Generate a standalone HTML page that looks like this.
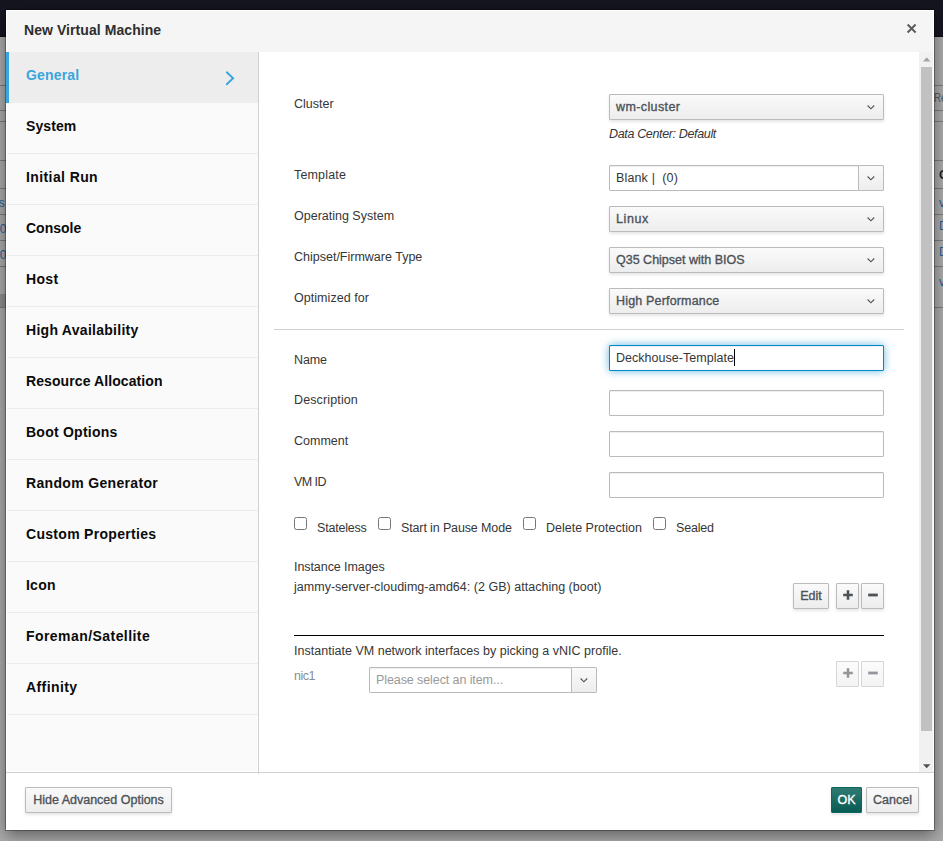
<!DOCTYPE html>
<html>
<head>
<meta charset="utf-8">
<title>New Virtual Machine</title>
<style>
*{box-sizing:border-box;margin:0;padding:0}
html,body{width:943px;height:841px;overflow:hidden}
body{position:relative;background:#ababab;font-family:"Liberation Sans",sans-serif;font-size:13px;color:#363636}
.abs{position:absolute}
#topbar{left:0;top:0;width:943px;height:37px;background:#14151f;border-bottom:1px solid #0c0d14}
.bgline{position:absolute;height:1px;background:#7b7b7b}
.bgtxt{position:absolute;font-size:12px;line-height:14px;color:#1c5f92;white-space:nowrap}
#dlg{left:6px;top:10px;width:928px;height:820px;background:#fff;box-shadow:0 0 0 1px rgba(0,0,0,.3),0 5px 15px rgba(0,0,0,.46)}
#hdr{left:1px;top:1px;width:926px;height:41px;background:#f5f5f5}
#title{left:17px;letter-spacing:0.07px;top:10px;font-size:14px;font-weight:bold;color:#2e2e2e;white-space:nowrap;line-height:18px}
#side{left:1px;top:42px;width:250px;height:719px;background:#fafafa}
#sideb{left:252px;top:42px;width:1px;height:722px;background:#d1d1d1;z-index:2}
.it{position:absolute;left:0;width:251px;height:51px;background:#fafafa;border-bottom:1px solid #ececec;font-size:14px;font-weight:bold;color:#0b0b0b;line-height:18px;padding:14px 0 0 19px;white-space:nowrap}
.it.act{left:-1px;width:252px;background:#ededed;color:#39a5dc;border-bottom:none;height:51px;border-left:3px solid #39a5dc;padding-left:17px;padding-top:14px}
#content{left:253px;top:42px;width:661px;height:720px;background:#fff}
.lbl{position:absolute;left:288px;font-size:12.5px;line-height:16px;color:#363636;white-space:nowrap}
.sel{position:absolute;left:603px;width:275px;height:26px;border:1px solid #bbb;border-radius:1px;background:linear-gradient(#fafafa,#ededed);box-shadow:0 2px 3px rgba(3,3,3,.1);font-size:12.5px;-webkit-text-stroke:0.35px #4d5258;color:#4d5258;line-height:24px;padding-left:6px;white-space:nowrap}
.inp{position:absolute;left:603px;width:275px;height:26px;border:1px solid #bbb;border-radius:1px;background:#fff;box-shadow:inset 0 1px 1px rgba(3,3,3,.075);font-size:12.5px;line-height:24px;padding-left:6px;color:#363636;white-space:nowrap}
.inp.focus{border-color:#0088ce;box-shadow:inset 0 1px 1px rgba(3,3,3,.075),0 0 8px rgba(0,136,206,.6)}
.btn{position:absolute;height:26px;border:1px solid #bbb;border-radius:1px;background:linear-gradient(#fafafa,#ededed);box-shadow:0 2px 3px rgba(3,3,3,.1);font-size:12.5px;-webkit-text-stroke:0.35px #4d5258;color:#4d5258;line-height:24px;text-align:center;white-space:nowrap}
.cb{position:absolute;top:507px;width:13px;height:13px;border:1px solid #767676;border-radius:2.5px;background:#fff}
.cbl{position:absolute;top:510px;font-size:12.5px;line-height:16px;white-space:nowrap}
svg{position:absolute;overflow:visible}
</style>
</head>
<body>
<div id="topbar" class="abs"></div>

<!-- background page peeking out at the edges -->
<div id="bgL" class="abs" style="left:0;top:0;width:6px;height:841px;overflow:hidden">
  <div class="bgline" style="left:0;width:6px;top:85px"></div>
  <div class="bgline" style="left:0;width:6px;top:110px"></div>
  <div class="bgline" style="left:0;width:6px;top:121px"></div>
  <div class="bgline" style="left:0;width:6px;top:160px"></div>
  <div class="bgline" style="left:0;width:6px;top:188px"></div>
  <div class="bgline" style="left:0;width:6px;top:214px"></div>
  <div class="bgline" style="left:0;width:6px;top:240px"></div>
  <div class="bgline" style="left:0;width:6px;top:266px"></div>
  <div class="bgline" style="left:0;width:6px;top:307px"></div>
  <div class="abs" style="left:0;top:294px;width:6px;height:13px;background:#8e8e8e"></div>
  <div class="bgtxt" style="left:-1.3px;top:196px">s</div>
  <div class="bgtxt" style="left:-4.2px;top:222px">-0</div>
  <div class="bgtxt" style="left:-0.3px;top:248px">0</div>
</div>
<div id="bgR" class="abs" style="left:934px;top:0;width:9px;height:841px;overflow:hidden">
  <div class="bgline" style="left:0;width:9px;top:85px"></div>
  <div class="bgline" style="left:0;width:9px;top:110px"></div>
  <div class="bgline" style="left:0;width:9px;top:121px"></div>
  <div class="bgline" style="left:0;width:9px;top:160px"></div>
  <div class="bgline" style="left:0;width:9px;top:188px"></div>
  <div class="bgline" style="left:0;width:9px;top:214px"></div>
  <div class="bgline" style="left:0;width:9px;top:240px"></div>
  <div class="bgline" style="left:0;width:9px;top:266px"></div>
  <div class="bgline" style="left:0;width:9px;top:307px"></div>
  <div class="bgtxt" style="left:-0.5px;top:91px;color:#4d5a66;transform:scaleX(.8);transform-origin:0 0">Re</div>
  <div class="bgtxt" style="left:5px;top:168px;color:#1d1d1d;font-weight:bold">C</div>
  <div class="bgtxt" style="left:5px;top:196px">v</div>
  <div class="bgtxt" style="left:5px;top:219px">D</div>
  <div class="bgtxt" style="left:5px;top:245px">D</div>
  <div class="bgtxt" style="left:5px;top:274.5px">v</div>
</div>

<div id="dlg" class="abs">
  <div id="hdr" class="abs">
    <div id="title" class="abs">New Virtual Machine</div>
    <svg style="left:899px;top:12px" width="12" height="12" viewBox="0 0 12 12"><path d="M1.6 1.5 L9.6 9.5 M9.6 1.5 L1.6 9.5" stroke="#5a5a5a" stroke-width="1.9" fill="none"/></svg>
  </div>

  <div id="side" class="abs">
    <div class="it act" style="top:0;letter-spacing:0.17px">General
      <svg style="left:216px;top:19px" width="10" height="15" viewBox="0 0 10 15"><path d="M1.8 1.3 L8.1 7.3 L1.8 13.3" stroke="#39a5dc" stroke-width="1.9" stroke-linecap="round" fill="none"/></svg>
    </div>
    <div class="it" style="top:51px;letter-spacing:0.10px">System</div>
    <div class="it" style="top:102px;letter-spacing:0.40px">Initial Run</div>
    <div class="it" style="top:153px;letter-spacing:0.00px">Console</div>
    <div class="it" style="top:204px;letter-spacing:0.33px">Host</div>
    <div class="it" style="top:255px;letter-spacing:0.28px">High Availability</div>
    <div class="it" style="top:306px;letter-spacing:0.09px">Resource Allocation</div>
    <div class="it" style="top:357px;letter-spacing:0.24px">Boot Options</div>
    <div class="it" style="top:408px;letter-spacing:0.33px">Random Generator</div>
    <div class="it" style="top:459px;letter-spacing:0.30px">Custom Properties</div>
    <div class="it" style="top:510px;letter-spacing:0.23px">Icon</div>
    <div class="it" style="top:561px;letter-spacing:0.44px">Foreman/Satellite</div>
    <div class="it" style="top:612px;letter-spacing:0.40px">Affinity</div>
  </div>

  <div id="sideb" class="abs"></div>
  <!-- content is positioned relative to dialog (offset 6,10) -->
  <div class="lbl" style="top:86px;letter-spacing:0.00px">Cluster</div>
  <div class="sel" style="top:84px;letter-spacing:0.39px">wm-cluster<svg style="left:256.5px;top:10px" width="8" height="5" viewBox="0 0 8 5"><path d="M0.6 0.5 L3.9 3.8 L7.2 0.5" stroke="#50555b" stroke-width="1.15" fill="none"/></svg></div>
  <div class="lbl" style="left:603px;top:116px;font-style:italic;letter-spacing:-0.35px">Data Center: Default</div>

  <div class="lbl" style="top:157px;letter-spacing:0.17px">Template</div>
  <div class="inp" style="top:155px;width:250px;letter-spacing:0.15px">Blank |&nbsp; (0)</div>
  <div class="btn" style="left:852px;top:155px;width:26px;box-shadow:none"><svg style="left:7.5px;top:10px" width="8" height="5" viewBox="0 0 8 5"><path d="M0.6 0.5 L3.9 3.8 L7.2 0.5" stroke="#50555b" stroke-width="1.15" fill="none"/></svg></div>

  <div class="lbl" style="top:198px;letter-spacing:0.00px">Operating System</div>
  <div class="sel" style="top:196px;letter-spacing:0.6px">Linux<svg style="left:256.5px;top:10px" width="8" height="5" viewBox="0 0 8 5"><path d="M0.6 0.5 L3.9 3.8 L7.2 0.5" stroke="#50555b" stroke-width="1.15" fill="none"/></svg></div>
  <div class="lbl" style="top:239px;letter-spacing:0.00px">Chipset/Firmware Type</div>
  <div class="sel" style="top:237px">Q35 Chipset with BIOS<svg style="left:256.5px;top:10px" width="8" height="5" viewBox="0 0 8 5"><path d="M0.6 0.5 L3.9 3.8 L7.2 0.5" stroke="#50555b" stroke-width="1.15" fill="none"/></svg></div>
  <div class="lbl" style="top:280px;letter-spacing:0.05px">Optimized for</div>
  <div class="sel" style="top:278px;letter-spacing:0.17px">High Performance<svg style="left:256.5px;top:10px" width="8" height="5" viewBox="0 0 8 5"><path d="M0.6 0.5 L3.9 3.8 L7.2 0.5" stroke="#50555b" stroke-width="1.15" fill="none"/></svg></div>

  <div class="abs" style="left:268px;top:319px;width:630px;height:1px;background:#d1d1d1"></div>

  <div class="lbl" style="top:342px;letter-spacing:-0.15px">Name</div>
  <div class="inp focus" style="top:335px;letter-spacing:0.03px">Deckhouse-Template<span style="display:inline-block;width:1px;height:17px;background:#000;vertical-align:-4px;margin-left:0.5px"></span></div>
  <div class="lbl" style="top:382px;letter-spacing:0.13px">Description</div>
  <div class="inp" style="top:380px"></div>
  <div class="lbl" style="top:423px;letter-spacing:0.00px">Comment</div>
  <div class="inp" style="top:421px"></div>
  <div class="lbl" style="top:464px;letter-spacing:-0.55px">VM ID</div>
  <div class="inp" style="top:462px"></div>

  <div class="cb" style="left:288px"></div><div class="cbl" style="left:311px;letter-spacing:-0.20px">Stateless</div>
  <div class="cb" style="left:372px"></div><div class="cbl" style="left:395px;letter-spacing:-0.13px">Start in Pause Mode</div>
  <div class="cb" style="left:517px"></div><div class="cbl" style="left:540px;letter-spacing:0.00px">Delete Protection</div>
  <div class="cb" style="left:647px"></div><div class="cbl" style="left:670px;letter-spacing:-0.20px">Sealed</div>

  <div class="lbl" style="top:549px;letter-spacing:-0.07px">Instance Images</div>
  <div class="lbl" style="top:569px;letter-spacing:0.02px">jammy-server-cloudimg-amd64: (2 GB) attaching (boot)</div>
  <div class="btn" style="left:787px;top:573px;width:36px">Edit</div>
  <div class="btn" style="left:830px;top:573px;width:23px"><svg style="left:6px;top:6.4px" width="10" height="10" viewBox="0 0 10 10"><path d="M0.2 5 H9.8 M5 0.2 V9.8" stroke="#4d5258" stroke-width="2.6" fill="none"/></svg></div>
  <div class="btn" style="left:855px;top:573px;width:23px"><svg style="left:6px;top:6.4px" width="10" height="10" viewBox="0 0 10 10"><path d="M0.2 5 H9.8" stroke="#4d5258" stroke-width="2.8" fill="none"/></svg></div>

  <div class="abs" style="left:288px;top:625px;width:590px;height:1px;background:#000"></div>
  <div class="lbl" style="top:633px;letter-spacing:0.02px">Instantiate VM network interfaces by picking a vNIC profile.</div>
  <div class="lbl" style="top:658px;color:#8b8d8f;letter-spacing:-0.5px">nic1</div>
  <div class="inp" style="left:363px;top:657px;width:203px;color:#999;letter-spacing:-0.09px">Please select an item...</div>
  <div class="btn" style="left:565px;top:657px;width:26px;box-shadow:none"><svg style="left:7.5px;top:10px" width="8" height="5" viewBox="0 0 8 5"><path d="M0.6 0.5 L3.9 3.8 L7.2 0.5" stroke="#50555b" stroke-width="1.15" fill="none"/></svg></div>
  <div class="btn" style="left:830px;top:651px;width:23px;box-shadow:none;opacity:.6"><svg style="left:6px;top:6.4px" width="10" height="10" viewBox="0 0 10 10"><path d="M0.2 5 H9.8 M5 0.2 V9.8" stroke="#4d5258" stroke-width="2.6" fill="none"/></svg></div>
  <div class="btn" style="left:855px;top:651px;width:23px;box-shadow:none;opacity:.6"><svg style="left:6px;top:6.4px" width="10" height="10" viewBox="0 0 10 10"><path d="M0.2 5 H9.8" stroke="#4d5258" stroke-width="2.8" fill="none"/></svg></div>

  <!-- scrollbar -->
  <div class="abs" style="left:913px;top:42px;width:14px;height:720px;background:#f1f1f1"></div>
  <div class="abs" style="left:915px;top:57px;width:11px;height:664px;background:#c1c1c1"></div>

  <svg style="left:916.8px;top:47.4px" width="8" height="5" viewBox="0 0 8 5"><path d="M0 4.6 L3.7 0.2 L7.4 4.6 Z" fill="#a3a3a3"/></svg>
  <svg style="left:916.8px;top:754.2px" width="8" height="5" viewBox="0 0 8 5"><path d="M0 0.2 L7.4 0.2 L3.7 4.2 Z" fill="#505050"/></svg>
  <!-- footer -->
  <div class="abs" style="left:0;top:762px;width:928px;height:58px;background:#fff;border-top:1px solid #d1d1d1"></div>
  <div class="btn" style="left:19px;top:777px;width:147px">Hide Advanced Options</div>
  <div class="btn" style="left:825px;top:777px;width:31px;background:linear-gradient(#2f7b73,#085b54);border-color:#0b6860;color:#fff;-webkit-text-stroke:0.35px #fff">OK</div>
  <div class="btn" style="left:860px;top:777px;width:53px">Cancel</div>
</div>
</body>
</html>
